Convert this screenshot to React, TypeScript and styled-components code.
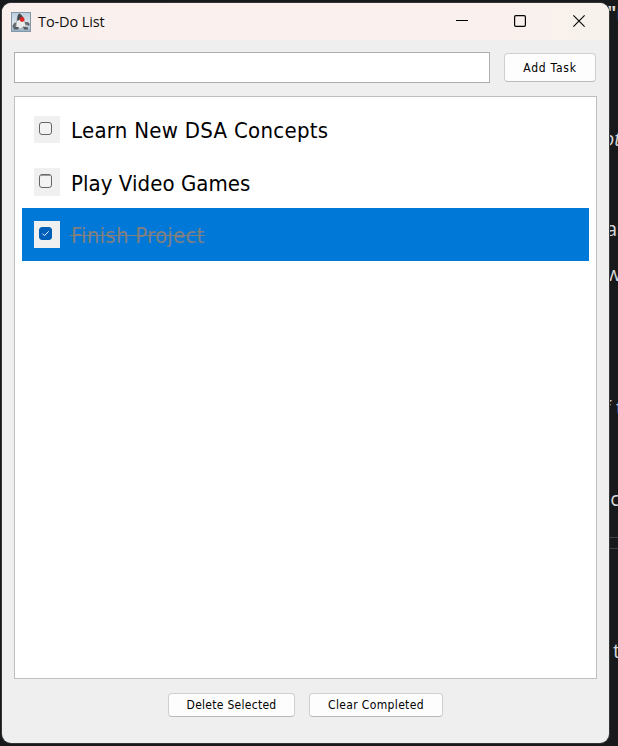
import React from "react";
import styled, { createGlobalStyle } from "styled-components";

const GlobalStyle = createGlobalStyle`
  * { box-sizing: border-box; }
  body { margin: 0; background: #18191b; overflow: hidden; }
`;

const uiFont = `"DejaVu Sans Condensed", "DejaVu Sans", sans-serif`;

const Desktop = styled.div`
  position: relative;
  width: 618px;
  height: 746px;
  padding: 3px 0 0 2px;
  overflow: hidden;
  background: #18191b;
`;

const Fragment = styled.span<{ $x: number; $y: number; $italic?: boolean; $bold?: boolean }>`
  position: absolute;
  left: ${(p) => p.$x}px;
  top: ${(p) => p.$y}px;
  font: ${(p) => (p.$italic ? "italic" : "normal")} ${(p) => (p.$bold ? 700 : 400)} 20px/24px "Open Sans", sans-serif;
  color: #d8d8d8;
  white-space: nowrap;
`;

const Rule = styled.div<{ $y: number }>`
  position: absolute;
  left: 609px;
  top: ${(p) => p.$y}px;
  width: 9px;
  height: 1px;
  background: #3d4043;
`;

const Window = styled.main`
  position: relative;
  display: flex;
  flex-direction: column;
  width: 607px;
  height: 740px;
  border-radius: 9px;
  overflow: hidden;
  background: #efefef;
  box-shadow: 0 0 0 1px #343536;
`;

const TitleBar = styled.header`
  display: flex;
  align-items: center;
  height: 37px;
  flex: none;
  padding: 0 1px 0 9px;
  background: linear-gradient(90deg, #f9f0ee 0%, #faf0ed 80%, #f7f2ec 100%);
`;

const Title = styled.h1`
  flex: 1;
  margin: 0 0 0 7px;
  font: 400 14.5px/20px "Open Sans", sans-serif;
  letter-spacing: -0.1px;
  color: #111;
`;

const WindowButton = styled.button`
  display: grid;
  place-items: center;
  width: 58.5px;
  height: 37px;
  padding: 0 0 1px;
  border: 0;
  background: none;
`;

const EntryRow = styled.form`
  display: flex;
  align-items: center;
  gap: 14px;
  padding: 12px 13px 0 12px;
`;

const TaskInput = styled.input`
  width: 476px;
  height: 31px;
  border: 1px solid #abadb3;
  background: #fff;
  outline: 0;
`;

const Button = styled.button<{ $width: number; $height: number; $spacing: number }>`
  width: ${(p) => p.$width}px;
  height: ${(p) => p.$height}px;
  padding: 1px 0 0;
  border: 1px solid #d0d0d0;
  border-bottom-color: #bababa;
  border-radius: 4px;
  background: #fdfdfd;
  font: 400 12px/15px ${uiFont};
  letter-spacing: ${(p) => p.$spacing}px;
  color: #000;
  white-space: nowrap;
`;

const TaskList = styled.ul`
  width: 583px;
  height: 583px;
  margin: 13px 0 0 12px;
  padding: 6px 7px;
  border: 1px solid #bebebe;
  background: #fff;
  list-style: none;
`;

const TaskRow = styled.li<{ $height: number; $done?: boolean }>`
  display: flex;
  align-items: flex-start;
  height: ${(p) => p.$height}px;
  padding: 13px 12px 0;
  background: ${(p) => (p.$done ? "#0078d7" : "#fff")};
`;

const CheckCell = styled.span<{ $height: number }>`
  width: 26px;
  height: ${(p) => p.$height}px;
  padding: 6px 0 0 5px;
  background: #f0f0f0;
`;

const CheckIcon = styled.svg`
  display: block;
`;

const TaskLabel = styled.span<{ $done?: boolean; $spacing: number; $drop: number }>`
  position: relative;
  margin: ${(p) => p.$drop}px 0 0 11px;
  font: 400 22px/28px ${uiFont};
  letter-spacing: ${(p) => p.$spacing}px;
  color: ${(p) => (p.$done ? "#808080" : "#000")};
  white-space: nowrap;

  &::after {
    content: "";
    display: ${(p) => (p.$done ? "block" : "none")};
    position: absolute;
    left: -1px;
    right: 0;
    top: 13px;
    height: 1px;
    background: #808080;
  }
`;

const Actions = styled.footer`
  display: flex;
  justify-content: center;
  gap: 14px;
  padding-top: 14px;
`;

const JavaIcon = () => (
  <svg width="20" height="20" viewBox="0 0 20 20">
    <defs>
      <linearGradient id="duke-sky" x1="0" y1="0" x2="0" y2="1">
        <stop offset="0" stopColor="#b9cddd" />
        <stop offset="0.6" stopColor="#dfe9ef" />
        <stop offset="1" stopColor="#91abc0" />
      </linearGradient>
    </defs>
    <rect x=".5" y=".5" width="19" height="19" fill="url(#duke-sky)" stroke="#8397a9" />
    <path d="M7 10 3 11 1 14.500l2 1 4-2zM13 10l4 0 2 2-1 2-5-2z" fill="#686d72" />
    <path d="M8 2c3 0 6 6 7 14l-3-1-3 2-4-1c0-6 1-11 3-14z" fill="#e9ebec" stroke="#858c91" strokeWidth=".5" />
    <path d="M8 1.500c2 .5 4.500 3 5 7L9 7.500 6.300 9C6 6 6.500 3 8 1.500z" fill="#42474b" />
    <path d="M2 15h6l-1 2.500H3zM12 14.500l5 1v2h-4z" fill="#555b60" />
    <circle cx="11.100" cy="7.500" r="2.4" fill="#dc2725" />
  </svg>
);

const Checkbox = ({ done, height }: { done?: boolean; height: number }) => (
  <CheckIcon width="13" height={height} viewBox={`0 0 13 ${height}`} fill="none">
    <rect
      x=".5"
      y=".5"
      width="12"
      height={height - 1}
      rx="2.5"
      fill={done ? "#005fb8" : "#f3f3f3"}
      stroke={done ? "#005fb8" : "#666"}
    />
    {height > 13 && <path d="M2 1.200h9" stroke="#777" />}
    {done && <path d="m3.5 6.700 2 2 4.200-4.400" stroke="#e5f1fb" />}
  </CheckIcon>
);

const tasks = [
  { label: "Learn New DSA Concepts", row: 52, cell: 27, box: 13, spacing: 0.28, drop: 1 },
  { label: "Play Video Games", row: 53, cell: 28, box: 14, spacing: 0.06, drop: 2 },
  { label: "Finish Project", row: 53, cell: 27, box: 13, spacing: 0.25, drop: 1, done: true },
];

export default function App() {
  return (
    <>
      <GlobalStyle />
      <Desktop>
        <Fragment $x={607} $y={1} $bold>"r</Fragment>
        <Fragment $x={603} $y={127} $italic>ot</Fragment>
        <Fragment $x={606} $y={217}>as</Fragment>
        <Fragment $x={606} $y={262}>w</Fragment>
        <Fragment $x={604} $y={396}>f t</Fragment>
        <Fragment $x={598} $y={487}>uc</Fragment>
        <Fragment $x={613} $y={639}>t</Fragment>
        <Rule $y={537} />
        <Rule $y={548} />
        <Window>
          <TitleBar>
            <JavaIcon />
            <Title>To-Do List</Title>
            <WindowButton aria-label="Minimize">
              <svg width="12" height="12" viewBox="0 0 12 12"><path d="M0 5.500h12" stroke="#000" /></svg>
            </WindowButton>
            <WindowButton aria-label="Maximize">
              <svg width="12" height="12" viewBox="0 0 12 12"><rect x=".6" y=".6" width="10.8" height="10.8" rx="1.3" fill="none" stroke="#000" strokeWidth="1.2" /></svg>
            </WindowButton>
            <WindowButton aria-label="Close">
              <svg width="12" height="12" viewBox="0 0 12 12"><path d="m.4.4 11.200 11.200M11.600.4.4 11.600" stroke="#000" strokeWidth="1.1" /></svg>
            </WindowButton>
          </TitleBar>
          <EntryRow onSubmit={(e) => e.preventDefault()}>
            <TaskInput aria-label="New task" />
            <Button $width={92} $height={29} $spacing={0.75}>Add Task</Button>
          </EntryRow>
          <TaskList>
            {tasks.map((t) => (
              <TaskRow key={t.label} $height={t.row} $done={t.done}>
                <CheckCell $height={t.cell}>
                  <Checkbox done={t.done} height={t.box} />
                </CheckCell>
                <TaskLabel $done={t.done} $spacing={t.spacing} $drop={t.drop}>{t.label}</TaskLabel>
              </TaskRow>
            ))}
          </TaskList>
          <Actions>
            <Button $width={127} $height={24} $spacing={0.28}>Delete Selected</Button>
            <Button $width={134} $height={24} $spacing={0.35}>Clear Completed</Button>
          </Actions>
        </Window>
      </Desktop>
    </>
  );
}
